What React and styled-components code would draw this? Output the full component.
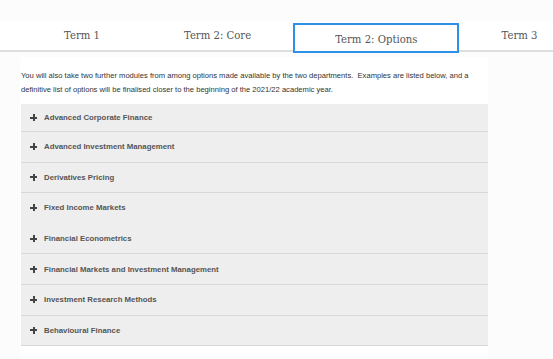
import React from "react";
import styled, { createGlobalStyle } from "styled-components";

const GlobalStyle = createGlobalStyle`
  html, body {
    margin: 0;
    padding: 0;
    background: #fcfcfc;
    overflow: hidden;
  }
`;

const tabs = ["Term 1", "Term 2: Core", "Term 2: Options", "Term 3"];

const modules = [
  "Advanced Corporate Finance",
  "Advanced Investment Management",
  "Derivatives Pricing",
  "Fixed Income Markets",
  "Financial Econometrics",
  "Financial Markets and Investment Management",
  "Investment Research Methods",
  "Behavioural Finance",
];

const App = () => {
  return (
    <>
      <GlobalStyle />
      <Page>
        <TabBar>
          {tabs.map((t) => (
            <Tab key={t} active={t === "Term 2: Options"}>
              {t}
            </Tab>
          ))}
        </TabBar>
        <Panel>
          <Intro>
            You will also take two further modules from among options made available by the two departments.&nbsp; Examples are listed below, and a
            <br />
            definitive list of options will be finalised closer to the beginning of the 2021/22 academic year.
          </Intro>
          <Accordion>
            {modules.map((m, i) => (
              <Row key={m} first={i === 0} noDivider={i === 3}>
                <Plus />
                <RowLabel>{m}</RowLabel>
              </Row>
            ))}
          </Accordion>
        </Panel>
      </Page>
    </>
  );
};

const Page = styled.div`
  width: 553px;
  height: 359px;
  padding-top: 22px;
  box-sizing: border-box;
  overflow: hidden;
`;

const TabBar = styled.div`
  display: flex;
  height: 28px;
  padding-left: 22px;
  background: #fff;
  border-bottom: 2px solid #dedede;
  white-space: nowrap;
`;

const Tab = styled.div`
  flex: none;
  padding: ${(p) => (p.active ? "2px 40px 0" : "0 42px 1px")};
  height: ${(p) => (p.active ? "30px" : "28px")};
  display: flex;
  align-items: center;
  justify-content: center;
  box-sizing: border-box;
  font-family: "DejaVu Serif", "Liberation Serif", serif;
  font-size: 10.1px;
  color: #555;
  margin-top: ${(p) => (p.active ? "1px" : "0")};
  border: ${(p) => (p.active ? "2px solid #2b90e6" : "none")};
  background: #fff;
  position: relative;
  z-index: ${(p) => (p.active ? 1 : 0)};
`;

const Panel = styled.div`
  margin: 5px 0 0 20px;
  width: 468px;
  background: #fff;
  padding-top: 12px;
  height: 300px;
`;

const Intro = styled.p`
  margin: 0 0 0 1px;
  font-family: "Liberation Sans", Arial, sans-serif;
  font-size: 7.6px;
  line-height: 14px;
  color: #333;
  white-space: nowrap;
`;

const Accordion = styled.div`
  margin-top: 7px;
  margin-left: 1px;
  width: 467px;
`;

const Row = styled.div`
  display: flex;
  align-items: center;
  height: ${(p) => (p.first ? "27px" : "29.6px")};
  background: #eeeeee;
  border-bottom: 1px solid ${(p) => (p.noDivider ? "#eeeeee" : "#d8d8d8")};
  padding-left: 9px;
`;

const Plus = styled.span`
  position: relative;
  flex: none;
  width: 7px;
  height: 7px;
  margin-right: 7px;
  &::before,
  &::after {
    content: "";
    position: absolute;
    background: #444;
  }
  &::before {
    left: 0;
    top: 2.5px;
    width: 7px;
    height: 2px;
  }
  &::after {
    left: 2.5px;
    top: 0;
    width: 2px;
    height: 7px;
  }
`;

const RowLabel = styled.span`
  font-family: "Liberation Sans", Arial, sans-serif;
  font-weight: bold;
  font-size: 7.8px;
  color: #555;
`;

export default App;
